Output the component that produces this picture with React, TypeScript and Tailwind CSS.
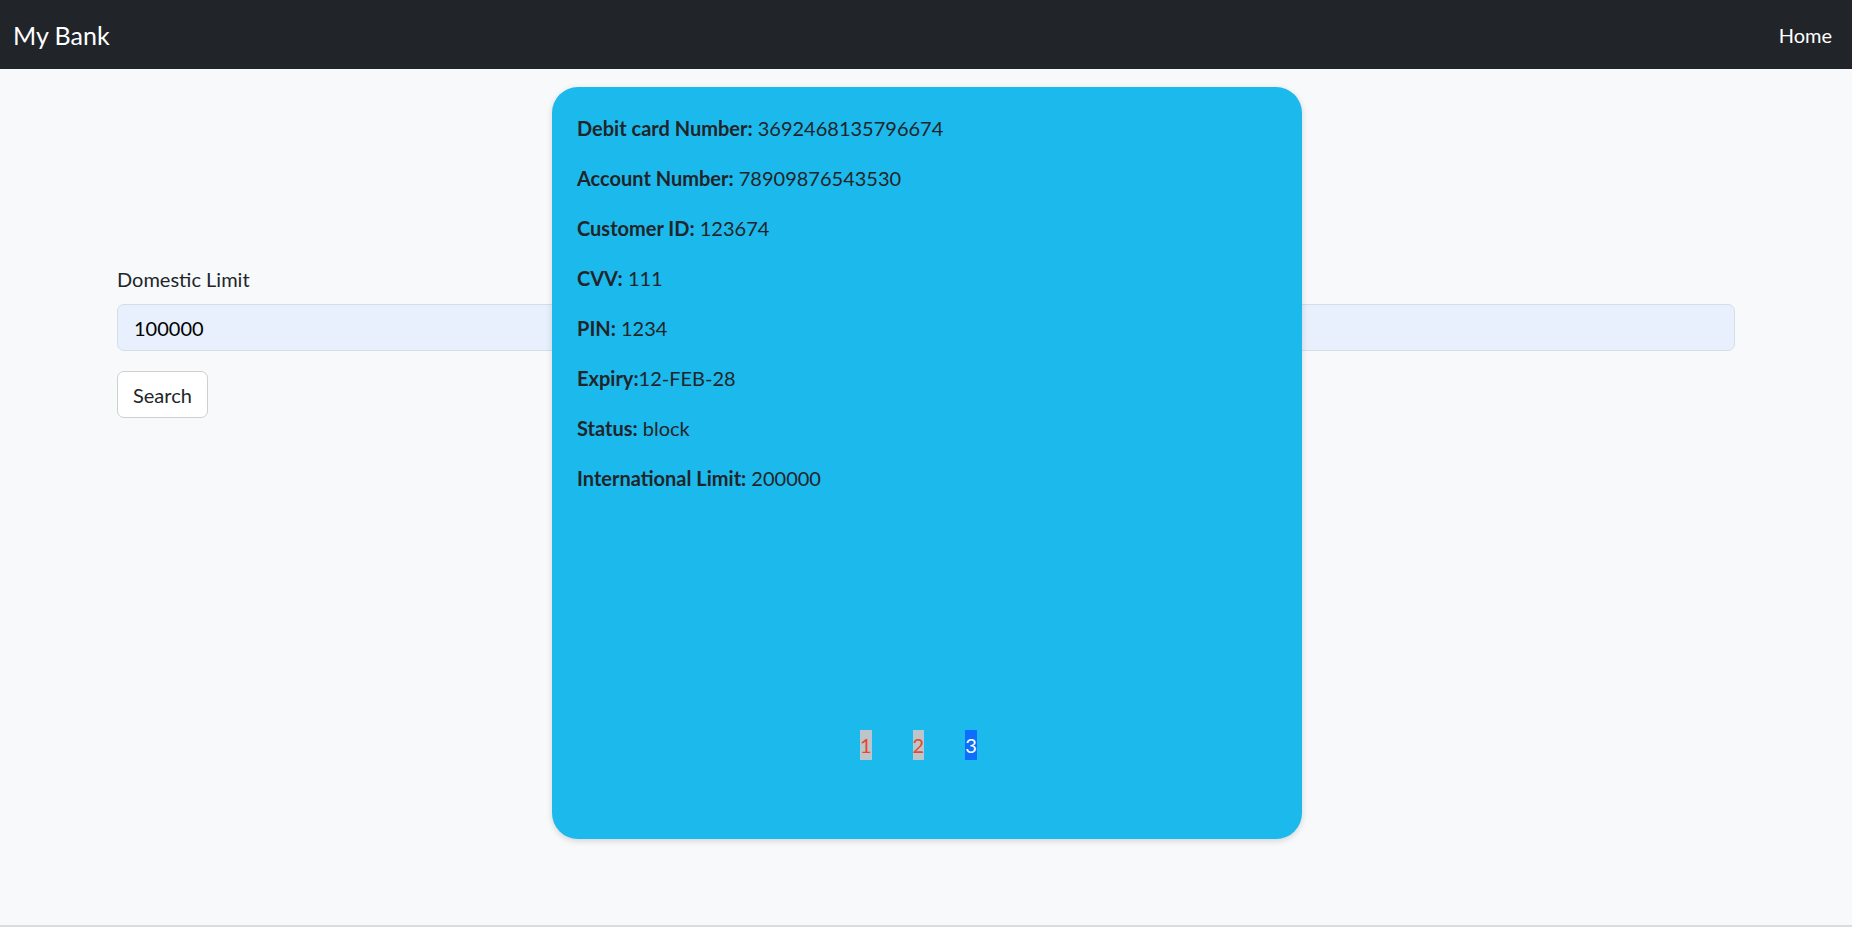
import React from "react";

const details: { label: string; value: string; tight?: boolean }[] = [
  { label: "Debit card Number:", value: "3692468135796674" },
  { label: "Account Number:", value: "78909876543530" },
  { label: "Customer ID:", value: "123674" },
  { label: "CVV:", value: "111" },
  { label: "PIN:", value: "1234" },
  { label: "Expiry:", value: "12-FEB-28", tight: true },
  { label: "Status:", value: "block" },
  { label: "International Limit:", value: "200000" },
];

export default function App() {
  return (
    <div
      className="relative flex h-[927px] flex-col bg-[#f8f9fa] text-[20px] leading-[30px] text-[#212529]"
      style={{ fontFamily: 'Lato, "Noto Sans", sans-serif' }}
    >
      {/* Navbar */}
      <nav className="flex h-[69px] shrink-0 items-center justify-between bg-[#212529] pl-[13px] pr-[20px]">
        <span className="text-[25px] text-white">My Bank</span>
        <span className="text-[20px] text-white">Home</span>
      </nav>

      {/* Search form */}
      <main className="flex-1 border-b-2 border-[#dcdcdc] pt-[195px]">
        <div className="mx-[117px]">
          <label className="mb-[10px] block">Domestic Limit</label>
          <input
            defaultValue="100000"
            className="block h-[47px] w-full rounded-[7px] border border-[#d5dde7] bg-[#e8f0fe] px-[16px] text-black outline-none"
          />
          <button className="mt-[20px] h-[47px] rounded-[7px] border border-[#cfcfcf] bg-white px-[15px]">
            Search
          </button>
        </div>
      </main>

      {/* Card details overlay */}
      <div className="absolute left-[552px] top-[87px] flex h-[752px] w-[750px] flex-col rounded-[26px] bg-[#1cb9ed] px-[25px] pb-[79px] pt-[26px] shadow-[0_2px_6px_rgba(0,0,0,0.15)]">
        {details.map((d) => (
          <p key={d.label} className="mb-[20px]">
            <b className="font-bold">{d.label}</b>
            {d.tight ? "" : " "}
            {d.value}
          </p>
        ))}
        <div className="mt-auto flex gap-[41px] pl-[283px]">
          <span className="bg-[#bcc5ca] text-[#e8472b]">1</span>
          <span className="bg-[#bcc5ca] text-[#e8472b]">2</span>
          <span className="bg-[#0d6efd] text-white">3</span>
        </div>
      </div>
    </div>
  );
}
